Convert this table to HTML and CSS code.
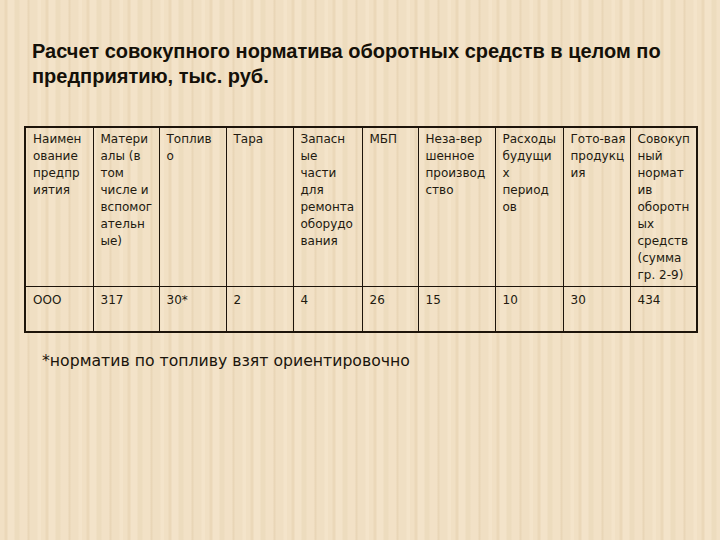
FILE: index.html
```html
<!DOCTYPE html>
<html lang="ru">
<head>
<meta charset="utf-8">
<title>Расчет совокупного норматива</title>
<link rel="stylesheet" href="styles.css">
</head>
<body>
<div class="slide">
  <h1 class="title">Расчет совокупного норматива оборотных средств в целом по предприятию, тыс. руб.</h1>
  <table class="grid">
    <colgroup>
      <col class="c1"><col class="c2"><col class="c3"><col class="c4"><col class="c5">
      <col class="c6"><col class="c7"><col class="c8"><col class="c9"><col class="c10">
    </colgroup>
    <tr class="head">
      <td>Наимен<br>ование<br>предпр<br>иятия</td>
      <td>Матери<br>алы (в<br>том<br>числе и<br>вспомог<br>ательн<br>ые)</td>
      <td>Топлив<br>о</td>
      <td>Тара</td>
      <td>Запасн<br>ые<br>части<br>для<br>ремонта<br>оборудо<br>вания</td>
      <td>МБП</td>
      <td>Неза-вер<br>шенное<br>производ<br>ство</td>
      <td>Расходы<br>будущи<br>х<br>период<br>ов</td>
      <td>Гото-вая<br>продукц<br>ия</td>
      <td>Совокуп<br>ный<br>нормат<br>ив<br>оборотн<br>ых<br>средств<br>(сумма<br>гр. 2-9)</td>
    </tr>
    <tr class="data">
      <td>ООО</td>
      <td>317</td>
      <td>30*</td>
      <td>2</td>
      <td>4</td>
      <td>26</td>
      <td>15</td>
      <td>10</td>
      <td>30</td>
      <td>434</td>
    </tr>
  </table>
  <p class="note">*норматив по топливу взят ориентировочно</p>
</div>
</body>
</html>
```
FILE: styles.css
```css
html, body {
  margin: 0;
  padding: 0;
}
body {
  width: 720px;
  height: 540px;
  overflow: hidden;
  background-color: #efdec1;
  background-image: repeating-linear-gradient(90deg,
    #f1e0c4 0px, #f1e0c4 4px,
    #ebd8b9 5px, #ebd8b9 7px,
    #f3e3c9 8px, #f3e3c9 14px,
    #eddcbe 15px, #eddcbe 19px,
    #f2e1c6 20px, #f2e1c6 27px,
    #e9d6b7 28px, #e9d6b7 29px,
    #f0dfc3 30px, #f0dfc3 37px,
    #f4e4ca 38px, #f4e4ca 41px);
}
.slide {
  box-sizing: border-box;
  width: 720px;
  height: 540px;
  padding: 39px 24px 0 24px;
}
.title {
  margin: 0 0 37px 8px;
  font-family: "Liberation Sans", Arial, sans-serif;
  font-weight: bold;
  font-size: 20px;
  line-height: 25px;
  color: #141008;
  width: 660px;
}
.grid {
  border-collapse: collapse;
  table-layout: fixed;
  width: 672px;
  border: 2px solid #1d140a;
  font-family: "DejaVu Sans", Verdana, sans-serif;
  font-size: 12px;
  line-height: 17px;
  color: #221a10;
}
.grid td {
  border: 1px solid #1d140a;
  vertical-align: top;
  padding: 3px 2px 0 7px;
  white-space: nowrap;
  overflow: hidden;
}
.head td { height: 155px; }
.data td { height: 39px; padding-top: 5px; }
.c1 { width: 68px; }
.c2 { width: 66px; }
.c3 { width: 67px; }
.c4 { width: 67px; }
.c5 { width: 69px; }
.c6 { width: 56px; }
.c7 { width: 77px; }
.c8 { width: 68px; }
.c9 { width: 67px; }
.c10 { width: 67px; }
.note {
  margin: 19px 0 0 18px;
  font-family: "DejaVu Sans", Verdana, sans-serif;
  font-size: 15.7px;
  line-height: 18px;
  color: #1a140c;
}
```
